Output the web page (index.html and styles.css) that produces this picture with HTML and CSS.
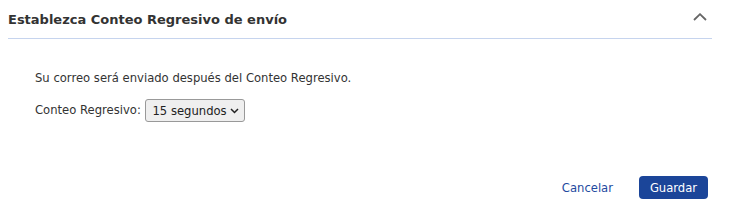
FILE: index.html
```html
<!DOCTYPE html>
<html lang="es">

<head>
  <meta charset="UTF-8">
  <meta name="viewport" content="width=device-width, initial-scale=1.0">
  <title>Conteo Regresivo de envío</title>
  <link rel="stylesheet" href="styles.css">
</head>

<body>
  <div class="panel">
    <div class="panel-header">
      <h2>Establezca Conteo Regresivo de envío</h2>
      <button class="collapse" title="Contraer">
        <svg width="14" height="8" viewBox="0 0 14 8">
          <path d="M1 7 L7 1.2 L13 7" fill="none" stroke="#666" stroke-width="1.8"/>
        </svg>
      </button>
    </div>

    <div class="panel-body">
      <p>Su correo será enviado después del Conteo Regresivo.</p>
      <label for="countdown">Conteo Regresivo:</label>
      <select id="countdown">
        <option>5 segundos</option>
        <option>10 segundos</option>
        <option selected>15 segundos</option>
        <option>20 segundos</option>
        <option>30 segundos</option>
      </select>
    </div>

    <div class="panel-footer">
      <a href="#" class="cancel">Cancelar</a>
      <button class="save">Guardar</button>
    </div>
  </div>
</body>

</html>
```

FILE: styles.css
```css
body {
  margin: 0;
  font-family: "DejaVu Sans", Verdana, sans-serif;
  font-size: 11.6px;
  color: #333;
  background: #fff;
}

.panel {
  width: 704px;
  margin-left: 8px;
}

.panel-header {
  display: flex;
  justify-content: space-between;
  align-items: center;
  height: 38px;
  border-bottom: 1px solid #c6d4ee;
}

.panel-header h2 {
  margin: 0;
  font-size: 13px;
  font-weight: bold;
  color: #333;
}

.collapse {
  background: none;
  border: none;
  padding: 0;
  margin-right: 5px;
  margin-top: -6px;
  cursor: pointer;
}

.panel-body {
  padding: 32px 27px 0;
  height: 137px;
  box-sizing: border-box;
}

.panel-body p {
  margin: 0 0 14px;
}

.panel-body label {
  margin-right: 1px;
}

select {
  appearance: none;
  font-family: "DejaVu Sans", Verdana, sans-serif;
  font-size: 11.6px;
  color: #222;
  width: 100px;
  height: 23px;
  padding: 0 0 0 6px;
  border: 1px solid #999;
  border-radius: 3px;
  background-color: #efefef;
  background-image: url("data:image/svg+xml,%3Csvg xmlns='http://www.w3.org/2000/svg' width='9' height='6' viewBox='0 0 9 6'%3E%3Cpath d='M1 1 L4.5 4.5 L8 1' fill='none' stroke='%23222' stroke-width='1.5'/%3E%3C/svg%3E");
  background-repeat: no-repeat;
  background-position: right 5px center;
  vertical-align: middle;
}

.panel-footer {
  display: flex;
  justify-content: flex-end;
  align-items: center;
  padding-right: 4px;
  gap: 26px;
}

.cancel {
  color: #1e4a9f;
  text-decoration: none;
}

.save {
  font-family: "DejaVu Sans", Verdana, sans-serif;
  font-size: 11.6px;
  color: #fff;
  background-color: #1b4599;
  border: none;
  border-radius: 4px;
  width: 69px;
  height: 23px;
  padding: 0;
  cursor: pointer;
}
```
